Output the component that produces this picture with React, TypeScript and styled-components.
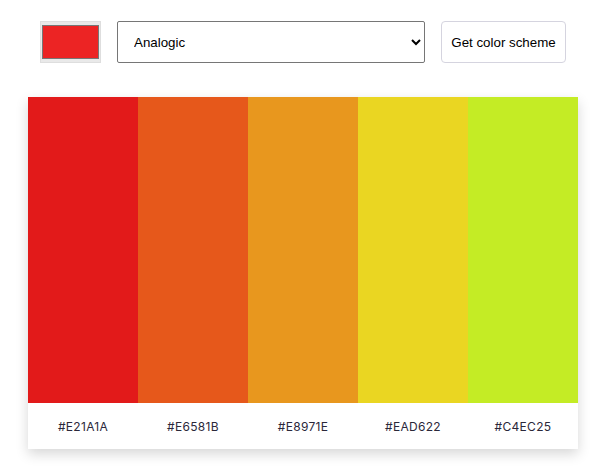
import styled, { createGlobalStyle } from "styled-components"

const GlobalStyle = createGlobalStyle`
  html, body {
    margin: 0;
    padding: 0;
    background: #ffffff;
  }
  body {
    font-family: "Liberation Sans", Arial, sans-serif;
  }
`

const Page = styled.main`
  display: flex;
  flex-direction: column;
  gap: 34px;
  padding: 21px 16px 24px 28px;
`

const Header = styled.form`
  display: flex;
  flex-direction: row;
  align-items: center;
  padding-left: 12px;
  height: 42px;
`

const ColorPicker = styled.input`
  width: 61px;
  height: 42px;
  margin: 0 16px 0 0;
  padding: 3px 1px;
  box-sizing: border-box;
  border: 1px solid #dedede;
  background: #e9e9e9;
  cursor: pointer;
  &::-webkit-color-swatch-wrapper {
    padding: 0;
  }
  &::-webkit-color-swatch {
    border: 1px solid #777777;
    border-radius: 0;
  }
`

const ModeSelect = styled.select`
  width: 308px;
  height: 42px;
  margin: 0 16px 0 0;
  padding: 0 6px 0 12px;
  box-sizing: border-box;
  border: 1px solid #767676;
  border-radius: 2px;
  background: #ffffff;
  color: #000000;
  font-family: "Liberation Sans", Arial, sans-serif;
  font-size: 13.33px;
`

const SubmitButton = styled.button`
  height: 42px;
  width: 125px;
  padding: 0 6px;
  box-sizing: border-box;
  border: 1px solid #d5d4df;
  border-radius: 4px;
  background: #ffffff;
  color: #000000;
  font-family: "Liberation Sans", Arial, sans-serif;
  font-size: 13.33px;
  white-space: nowrap;
  cursor: pointer;
`

const Palette = styled.section`
  display: grid;
  grid-template-columns: repeat(5, 1fr);
  grid-template-rows: 306px 46px;
  width: 550px;
  box-shadow: 0 5px 12px rgba(0, 0, 0, 0.16);
`

const Swatch = styled.div<{ $color: string }>`
  background: ${(p) => p.$color};
`

const HexLabel = styled.p`
  display: flex;
  align-items: center;
  justify-content: center;
  margin: 0;
  background: #ffffff;
  color: #2b283a;
  font-family: Inter, "Noto Sans", sans-serif;
  font-size: 12px;
  letter-spacing: 0.3px;
`

const colors = ["#E21A1A", "#E6581B", "#E8971E", "#EAD622", "#C4EC25"]

export default function App() {
  return (
    <>
      <GlobalStyle />
      <Page>
        <Header onSubmit={(e) => e.preventDefault()}>
          <ColorPicker type="color" defaultValue="#ec2424" />
          <ModeSelect defaultValue="analogic">
            <option value="monochrome">Monochrome</option>
            <option value="monochrome-dark">Monochrome-dark</option>
            <option value="monochrome-light">Monochrome-light</option>
            <option value="analogic">Analogic</option>
            <option value="complement">Complement</option>
            <option value="analogic-complement">Analogic-complement</option>
            <option value="triad">Triad</option>
          </ModeSelect>
          <SubmitButton type="submit">Get color scheme</SubmitButton>
        </Header>
        <Palette>
          {colors.map((c) => (
            <Swatch key={c} $color={c} />
          ))}
          {colors.map((c) => (
            <HexLabel key={c + "-label"}>{c}</HexLabel>
          ))}
        </Palette>
      </Page>
    </>
  )
}
